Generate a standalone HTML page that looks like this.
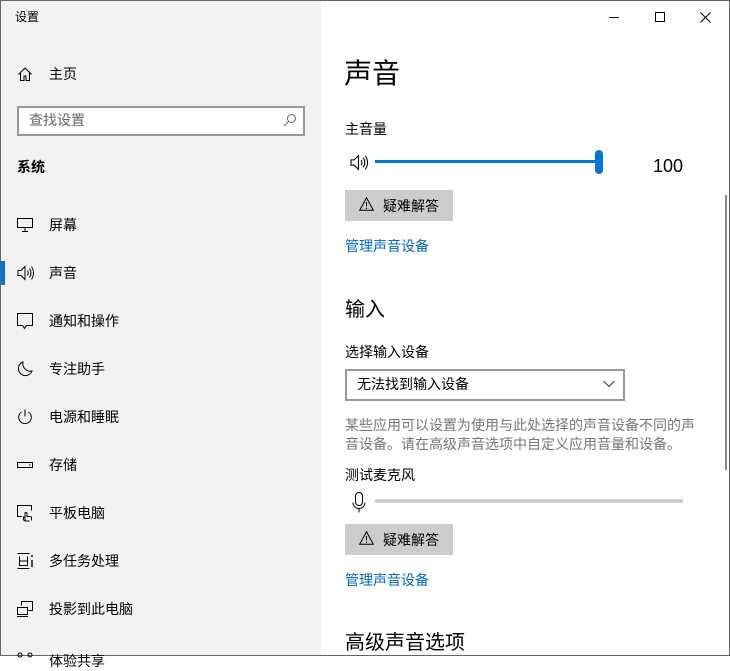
<!DOCTYPE html>
<html><head><meta charset="utf-8"><style>
*{margin:0;padding:0;box-sizing:border-box}
body{width:730px;height:656px;overflow:hidden;background:#fff;font-family:"Liberation Sans","Noto Sans CJK SC",sans-serif;color:#000;position:relative}
.a{position:absolute;white-space:nowrap}
#left{position:absolute;left:0;top:0;width:321px;height:656px;background:#f2f2f2}
.nav{position:absolute;left:49px;font-size:14px;line-height:20px}
.ic{position:absolute;left:17px}
.t14{font-size:14px;line-height:20px}
.btn{position:absolute;left:345px;width:108px;height:31px;background:#ccc;font-size:14px}
.lnk{color:#0067c0;font-size:14px;line-height:20px}
</style></head><body>
<div id="left"></div>
<div style="position:absolute;left:0;top:0;width:1px;height:656px;background:#666"></div>
<div style="position:absolute;right:0;top:0;width:1px;height:656px;background:#666"></div>
<div style="position:absolute;left:0;bottom:0;width:730px;height:1px;background:#666"></div>
<div style="position:absolute;left:0;top:0;width:730px;height:1px;background:#666"></div>

<div class="a" style="left:15px;top:9px;font-size:12px;line-height:16px">设置</div>

<svg class="ic" style="top:66px" width="16" height="16" viewBox="0 0 16 16" fill="none" stroke="#000" stroke-width="1"><path d="M1.5 8.5L8 2l6.5 6.5M3.5 7v7.5h3.5v-4.5h2v4.5h3.5V7"/></svg>
<div class="nav" style="top:64px">主页</div>

<div style="position:absolute;left:17px;top:106px;width:288px;height:30px;border:2px solid #999;background:#fff"></div>
<div class="a t14" style="left:29px;top:110px;color:#666">查找设置</div>
<svg class="a" style="left:283px;top:113px" width="14" height="14" viewBox="0 0 14 14" fill="none" stroke="#666"><circle cx="8.5" cy="5.5" r="4"/><path d="M5.5 8.5L1 13"/></svg>

<div class="a t14" style="left:17px;top:157px;font-weight:bold">系统</div>

<svg class="ic" style="top:218px" width="16" height="14" viewBox="0 0 16 14" fill="none" stroke="#000"><rect x="0.5" y="0.5" width="15" height="9"/><path d="M8 10v3M5 13.5h6"/></svg>
<div class="nav" style="top:215px">屏幕</div>

<div style="position:absolute;left:1px;top:261px;width:4px;height:24px;background:#0078d7"></div>
<svg class="ic" style="top:265px" width="17" height="16" viewBox="0 0 17 16" fill="none" stroke="#000"><path d="M1 5.5h3l4-4v13l-4-4H1z"/><path d="M10.5 5.5q1.5 2.5 0 5M12.5 3.5q3 4.5 0 9M14.5 1.5q4 6.5 0 13"/></svg>
<div class="nav" style="top:263px">声音</div>

<svg class="ic" style="top:313px" width="16" height="17" viewBox="0 0 16 17" fill="none" stroke="#000"><path d="M0.5 0.5h15v12h-6l-2 3-2-3h-5z"/></svg>
<div class="nav" style="top:311px">通知和操作</div>

<svg class="ic" style="top:361px" width="16" height="16" viewBox="0 0 16 16" fill="none" stroke="#000"><path d="M6 1a7 7 0 1 0 9 9A7.5 7.5 0 0 1 6 1z"/></svg>
<div class="nav" style="top:359px">专注助手</div>

<svg class="ic" style="top:409px" width="16" height="16" viewBox="0 0 16 16" fill="none" stroke="#000"><path d="M8 0.5v7M4.5 3a6.3 6.3 0 1 0 7 0"/></svg>
<div class="nav" style="top:407px">电源和睡眠</div>

<svg class="ic" style="top:461px" width="16" height="8" viewBox="0 0 16 8" fill="none" stroke="#000"><rect x="0.5" y="1.5" width="15" height="5"/><path d="M12 4h1.5"/></svg>
<div class="nav" style="top:455px">存储</div>

<svg class="ic" style="top:505px" width="16" height="17" viewBox="0 0 16 17" fill="none" stroke="#000"><path d="M5 11.5H0.5v-11h14v5"/><path d="M8 15.5v-7a1 1 0 0 1 2 0v3h3a1.5 1.5 0 0 1 1.5 1.5v2.5"/><path d="M8 12H6.5v2a2 2 0 0 0 2 2h4"/></svg>
<div class="nav" style="top:503px">平板电脑</div>

<svg class="ic" style="top:553px" width="16" height="16" viewBox="0 0 16 16" fill="none" stroke="#000"><path d="M0.5 0.5h12M0.5 15.5h12M2.5 3.5v9h8v-9M3 8h7"/><path d="M15 2v2M15 7v7" stroke-width="1.4"/></svg>
<div class="nav" style="top:551px">多任务处理</div>

<svg class="ic" style="top:601px" width="16" height="16" viewBox="0 0 16 16" fill="none" stroke="#000"><path d="M4.5 4.5v-4h11v9h-4"/><rect x="0.5" y="6.5" width="10" height="7"/><path d="M0 15.5h11"/></svg>
<div class="nav" style="top:599px">投影到此电脑</div>
<div class="nav" style="top:651px">体验共享</div>
<svg class="ic" style="top:652px" width="16" height="8" viewBox="0 0 16 8" fill="none" stroke="#000"><circle cx="3" cy="3" r="2"/><circle cx="13" cy="3" r="2"/></svg>

<!-- title bar -->
<div style="position:absolute;left:609px;top:17px;width:10px;height:1px;background:#000"></div>
<div style="position:absolute;left:655px;top:12px;width:10px;height:10px;border:1px solid #000"></div>
<svg class="a" style="left:700px;top:12px" width="11" height="11" viewBox="0 0 11 11" stroke="#000"><path d="M0.5 0.5l10 10M10.5 0.5l-10 10"/></svg>

<!-- right -->
<div class="a" style="left:344px;top:56px;font-size:28px;line-height:36px">声音</div>
<div class="a t14" style="left:345px;top:119px">主音量</div>
<svg class="a" style="left:348px;top:154px" width="22" height="17" viewBox="0 0 17 16" fill="none" stroke="#000"><path d="M1 5.5h3l4-4v13l-4-4H1z"/><path d="M10.5 5.5q1.5 2.5 0 5M12.5 3.5q3 4.5 0 9M14.5 1.5q4 6.5 0 13"/></svg>
<div style="position:absolute;left:375px;top:160px;width:222px;height:3px;background:#0078d7"></div>
<div style="position:absolute;left:595px;top:150px;width:8px;height:24px;border-radius:4px;background:#0078d7"></div>
<div class="a" style="left:653px;top:155px;font-size:18px;line-height:22px">100</div>

<div class="btn" style="top:190px"></div>
<svg class="a" style="left:359px;top:197px" width="15" height="14" viewBox="0 0 15 14" fill="none" stroke="#000"><path d="M7.5 0.8L14.3 13.3H0.7z"/><path d="M7.5 5v4.5M7.5 10.8v1.2"/></svg>
<div class="a t14" style="left:383px;top:196px">疑难解答</div>
<div class="a lnk" style="left:345px;top:236px">管理声音设备</div>

<div class="a" style="left:345px;top:297px;font-size:20px;line-height:26px">输入</div>
<div class="a t14" style="left:345px;top:342px">选择输入设备</div>
<div style="position:absolute;left:345px;top:369px;width:280px;height:32px;border:2px solid #999"></div>
<div class="a t14" style="left:357px;top:374px">无法找到输入设备</div>
<svg class="a" style="left:603px;top:380px" width="12" height="8" viewBox="0 0 12 8" fill="none" stroke="#333"><path d="M0.5 1l5.5 5.5L11.5 1"/></svg>
<div class="a t14" style="left:345px;top:416px;color:#767676;line-height:19px;white-space:normal;width:355px">某些应用可以设置为使用与此处选择的声音设备不同的声音设备。请在高级声音选项中自定义应用音量和设备。</div>
<div class="a t14" style="left:345px;top:465px">测试麦克风</div>
<svg class="a" style="left:352px;top:492px" width="14" height="21" viewBox="0 0 14 21" fill="none" stroke="#000"><rect x="3.5" y="0.5" width="7" height="13" rx="3.5"/><path d="M1 10.5a6 6 0 0 0 12 0M7 16.5v4"/></svg>
<div style="position:absolute;left:375px;top:499px;width:308px;height:4px;background:#ccc"></div>

<div class="btn" style="top:524px"></div>
<svg class="a" style="left:359px;top:531px" width="15" height="14" viewBox="0 0 15 14" fill="none" stroke="#000"><path d="M7.5 0.8L14.3 13.3H0.7z"/><path d="M7.5 5v4.5M7.5 10.8v1.2"/></svg>
<div class="a t14" style="left:383px;top:530px">疑难解答</div>
<div class="a lnk" style="left:345px;top:570px">管理声音设备</div>
<div class="a" style="left:345px;top:630px;font-size:20px;line-height:26px">高级声音选项</div>

<div style="position:absolute;left:725px;top:195px;width:2px;height:275px;background:#888"></div>
</body></html>
